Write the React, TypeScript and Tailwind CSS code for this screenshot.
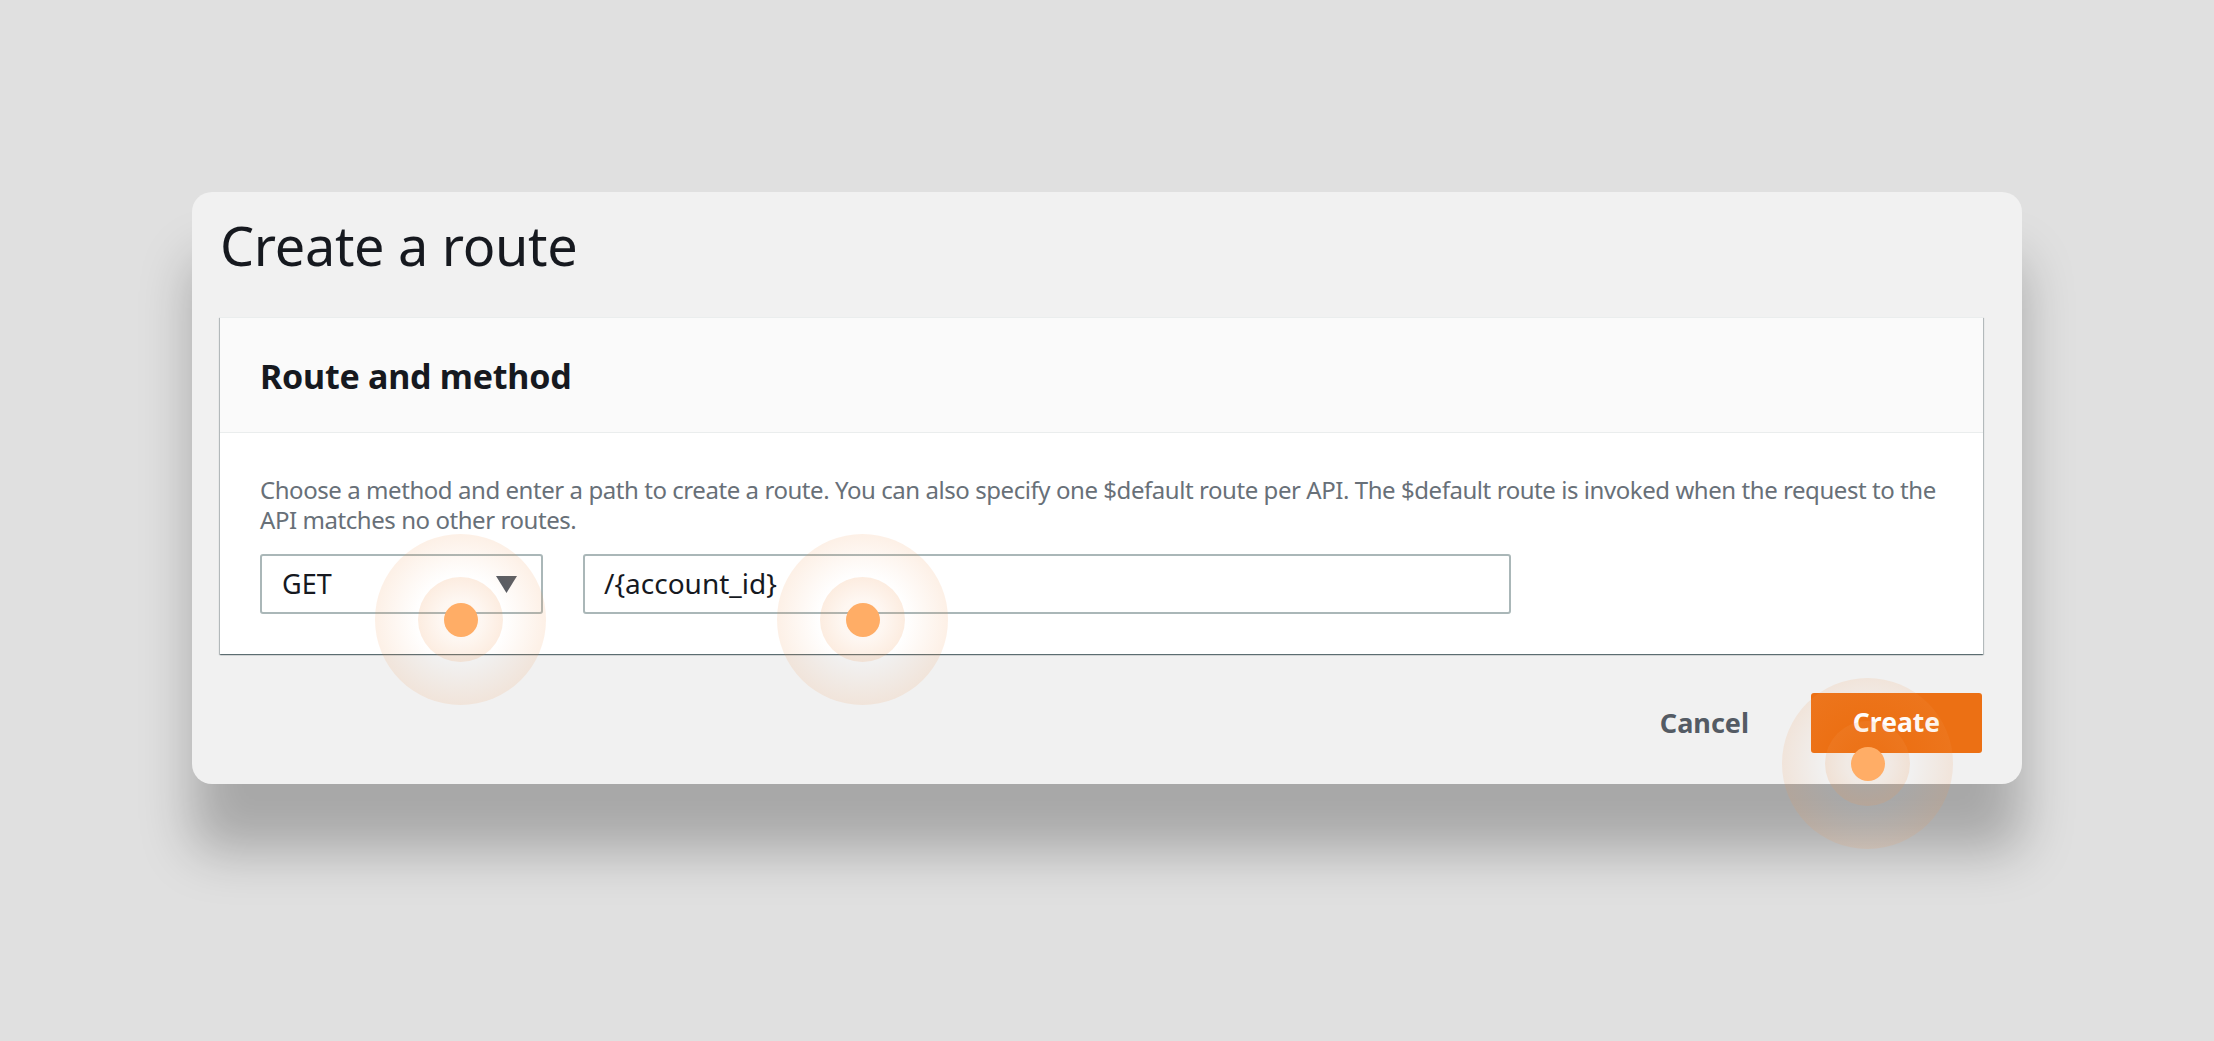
import React from "react";

function Hotspot({ className }: { className: string }) {
  return (
    <div className={`absolute flex h-[171px] w-[171px] items-center justify-center rounded-full bg-[radial-gradient(circle,rgba(240,150,80,0)_35%,rgba(240,150,80,0.26)_100%)] ${className}`}>
      <div className="flex h-[85px] w-[85px] items-center justify-center rounded-full bg-[radial-gradient(circle,rgba(240,150,80,0.08)_35%,rgba(240,150,80,0.26)_100%)]">
        <div className="h-[34px] w-[34px] rounded-full bg-[#ffad66]" />
      </div>
    </div>
  );
}

export default function App() {
  return (
    <div className="h-[1041px] w-full overflow-hidden bg-[#e0e0e0] pt-[192px] pl-[192px] font-['Noto_Sans','Liberation_Sans',sans-serif]">
      <div className="relative h-[592px] w-[1830px] rounded-[20px] bg-[#f1f1f1] shadow-[0_67px_52px_rgba(0,0,0,0.25)]">
        <div className="flex h-[125px] items-center pb-[20px] pl-[28px]">
          <h1 className="text-[54px] leading-[60px] font-normal tracking-[-0.3px] text-[#16191f]">Create a route</h1>
        </div>
        <div className="mr-[39px] ml-[28px] h-[337px] bg-white shadow-[0_1px_1px_0_rgba(0,28,36,0.4),1px_1px_1px_0_rgba(0,28,36,0.2),-1px_1px_1px_0_rgba(0,28,36,0.2)]">
          <div className="flex h-[116px] items-center border-y border-[#eaeded] bg-[#fafafa] pt-[2px] pl-[40px]">
            <h2 className="text-[34px] leading-[40px] font-bold tracking-[-0.25px] text-[#16191f]">Route and method</h2>
          </div>
          <div className="px-[40px] pt-[42px]">
            <p className="w-[1700px] text-[24px] leading-[30px] tracking-[-0.44px] text-[#687078]">
              Choose a method and enter a path to create a route. You can also specify one $default route per API. The $default route is invoked when the request to the API matches no other routes.
            </p>
            <div className="mt-[19px] flex gap-[40px]">
              <div className="flex h-[60px] w-[283px] items-center justify-between rounded-[3px] border-2 border-[#aab7b8] pr-[24px] pl-[20px] text-[27px] text-[#16191f]">
                <span>GET</span>
                <svg width="21" height="17" viewBox="0 0 21 17"><path d="M0 0H21L10.5 17Z" fill="#545b64" /></svg>
              </div>
              <div className="flex h-[60px] w-[928px] items-center rounded-[3px] border-2 border-[#aab7b8] pb-[2px] pl-[19px] text-[28px] text-[#16191f]">
                /{"{"}account_id{"}"}
              </div>
            </div>
          </div>
        </div>
        <div className="mr-[40px] flex items-center justify-end pt-[39px]">
          <span className="mr-[62px] text-[27px] font-bold text-[#545b64]">Cancel</span>
          <div className="flex h-[60px] w-[171px] items-center justify-center rounded-[3px] bg-[#ec7014] text-[26.5px] font-bold text-white">Create</div>
        </div>
        <Hotspot className="top-[342px] left-[183px]" />
        <Hotspot className="top-[342px] left-[585px]" />
        <Hotspot className="top-[486px] left-[1590px]" />
      </div>
    </div>
  );
}
